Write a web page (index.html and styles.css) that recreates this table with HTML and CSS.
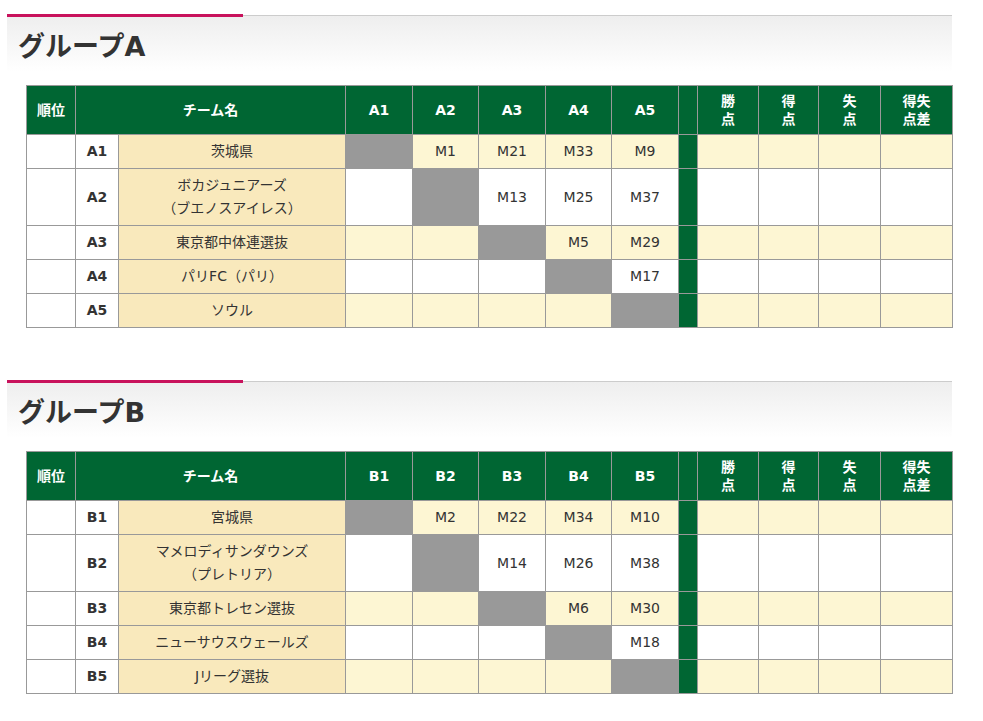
FILE: index.html
```html
<!DOCTYPE html>
<html lang="ja">
<head>
<meta charset="utf-8">
<title>グループ</title>
<link rel="stylesheet" href="styles.css">
</head>
<body>
<div class="page">
  <section class="group">
    <h2 class="group-head">グループA</h2>
    <table class="league">
      <colgroup>
        <col class="c-rank"><col class="c-code"><col class="c-name">
        <col class="c-m1"><col class="c-m2"><col class="c-m1"><col class="c-m2"><col class="c-m1">
        <col class="c-sep"><col class="c-s1"><col class="c-s2"><col class="c-s3"><col class="c-s4">
      </colgroup>
      <thead>
        <tr>
          <th>順位</th><th colspan="2">チーム名</th>
          <th>A1</th><th>A2</th><th>A3</th><th>A4</th><th>A5</th>
          <th class="sep"></th>
          <th>勝<br>点</th><th>得<br>点</th><th>失<br>点</th><th>得失<br>点差</th>
        </tr>
      </thead>
      <tbody>
        <tr class="odd">
          <td class="rank"></td><td class="code">A1</td><td class="name">茨城県</td>
          <td class="x"></td><td>M1</td><td>M21</td><td>M33</td><td>M9</td>
          <td class="sep"></td><td></td><td></td><td></td><td></td>
        </tr>
        <tr class="even">
          <td class="rank"></td><td class="code">A2</td><td class="name">ボカジュニアーズ<br>（ブエノスアイレス）</td>
          <td></td><td class="x"></td><td>M13</td><td>M25</td><td>M37</td>
          <td class="sep"></td><td></td><td></td><td></td><td></td>
        </tr>
        <tr class="odd">
          <td class="rank"></td><td class="code">A3</td><td class="name">東京都中体連選抜</td>
          <td></td><td></td><td class="x"></td><td>M5</td><td>M29</td>
          <td class="sep"></td><td></td><td></td><td></td><td></td>
        </tr>
        <tr class="even">
          <td class="rank"></td><td class="code">A4</td><td class="name">パリFC（パリ）</td>
          <td></td><td></td><td></td><td class="x"></td><td>M17</td>
          <td class="sep"></td><td></td><td></td><td></td><td></td>
        </tr>
        <tr class="odd">
          <td class="rank"></td><td class="code">A5</td><td class="name">ソウル</td>
          <td></td><td></td><td></td><td></td><td class="x"></td>
          <td class="sep"></td><td></td><td></td><td></td><td></td>
        </tr>
      </tbody>
    </table>
  </section>

  <section class="group group-next">
    <h2 class="group-head">グループB</h2>
    <table class="league">
      <colgroup>
        <col class="c-rank"><col class="c-code"><col class="c-name">
        <col class="c-m1"><col class="c-m2"><col class="c-m1"><col class="c-m2"><col class="c-m1">
        <col class="c-sep"><col class="c-s1"><col class="c-s2"><col class="c-s3"><col class="c-s4">
      </colgroup>
      <thead>
        <tr>
          <th>順位</th><th colspan="2">チーム名</th>
          <th>B1</th><th>B2</th><th>B3</th><th>B4</th><th>B5</th>
          <th class="sep"></th>
          <th>勝<br>点</th><th>得<br>点</th><th>失<br>点</th><th>得失<br>点差</th>
        </tr>
      </thead>
      <tbody>
        <tr class="odd">
          <td class="rank"></td><td class="code">B1</td><td class="name">宮城県</td>
          <td class="x"></td><td>M2</td><td>M22</td><td>M34</td><td>M10</td>
          <td class="sep"></td><td></td><td></td><td></td><td></td>
        </tr>
        <tr class="even">
          <td class="rank"></td><td class="code">B2</td><td class="name">マメロディサンダウンズ<br>（プレトリア）</td>
          <td></td><td class="x"></td><td>M14</td><td>M26</td><td>M38</td>
          <td class="sep"></td><td></td><td></td><td></td><td></td>
        </tr>
        <tr class="odd">
          <td class="rank"></td><td class="code">B3</td><td class="name">東京都トレセン選抜</td>
          <td></td><td></td><td class="x"></td><td>M6</td><td>M30</td>
          <td class="sep"></td><td></td><td></td><td></td><td></td>
        </tr>
        <tr class="even">
          <td class="rank"></td><td class="code">B4</td><td class="name">ニューサウスウェールズ</td>
          <td></td><td></td><td></td><td class="x"></td><td>M18</td>
          <td class="sep"></td><td></td><td></td><td></td><td></td>
        </tr>
        <tr class="odd">
          <td class="rank"></td><td class="code">B5</td><td class="name">Jリーグ選抜</td>
          <td></td><td></td><td></td><td></td><td class="x"></td>
          <td class="sep"></td><td></td><td></td><td></td><td></td>
        </tr>
      </tbody>
    </table>
  </section>
</div>
</body>
</html>
```

FILE: styles.css
```css
html, body {
  margin: 0;
  padding: 0;
  background: #fff;
}

body {
  font-family: "DejaVu Sans", "Noto Sans CJK JP", sans-serif;
  font-size: 14px;
  color: #333;
}

.page {
  padding: 15px 0 0 7px;
  width: 945px;
}

.group-next {
  margin-top: 53px;
}

.group-head {
  position: relative;
  margin: 0;
  height: 56px;
  border-top: 1px solid #cccccc;
  background: linear-gradient(to bottom, #eeeeee 0%, #ffffff 100%);
  padding-left: 11px;
  display: flex;
  align-items: center;
  font-family: "DejaVu Sans", "Noto Sans CJK JP", sans-serif;
  font-size: 27px;
  font-weight: bold;
  color: #333;
}

.group-head::before {
  content: "";
  position: absolute;
  left: 0;
  top: -2px;
  width: 236px;
  height: 3px;
  background: #c8125c;
}

.league {
  margin: 13px 0 0 19px;
  border-collapse: collapse;
  table-layout: fixed;
  width: 927px;
}

.c-rank { width: 49px; }
.c-code { width: 43px; }
.c-name { width: 227px; }
.c-m1 { width: 67px; }
.c-m2 { width: 66px; }
.c-sep { width: 19px; }
.c-s1 { width: 61px; }
.c-s2 { width: 60px; }
.c-s3 { width: 62px; }
.c-s4 { width: 72px; }

.league th,
.league td {
  border: 1px solid #999;
  text-align: center;
  vertical-align: middle;
}

.league th {
  background: #006633;
  color: #fff;
  font-weight: bold;
  font-size: 14px;
  line-height: 18px;
  padding: 6px 0;
}

.league td {
  line-height: 23px;
  padding: 5px 0;
  background: #fff;
}

.league tr.odd td {
  background: #fdf6d3;
}

.league td.rank,
.league tr.odd td.rank,
.league td.code,
.league tr.odd td.code {
  background: #fff;
}

.league td.code {
  font-weight: bold;
}

.league td.name,
.league tr.odd td.name {
  background: #f9e9bc;
}

.league td.x,
.league tr.odd td.x {
  background: #999999;
}

.league td.sep,
.league tr.odd td.sep,
.league th.sep {
  background: #006633;
}
```
